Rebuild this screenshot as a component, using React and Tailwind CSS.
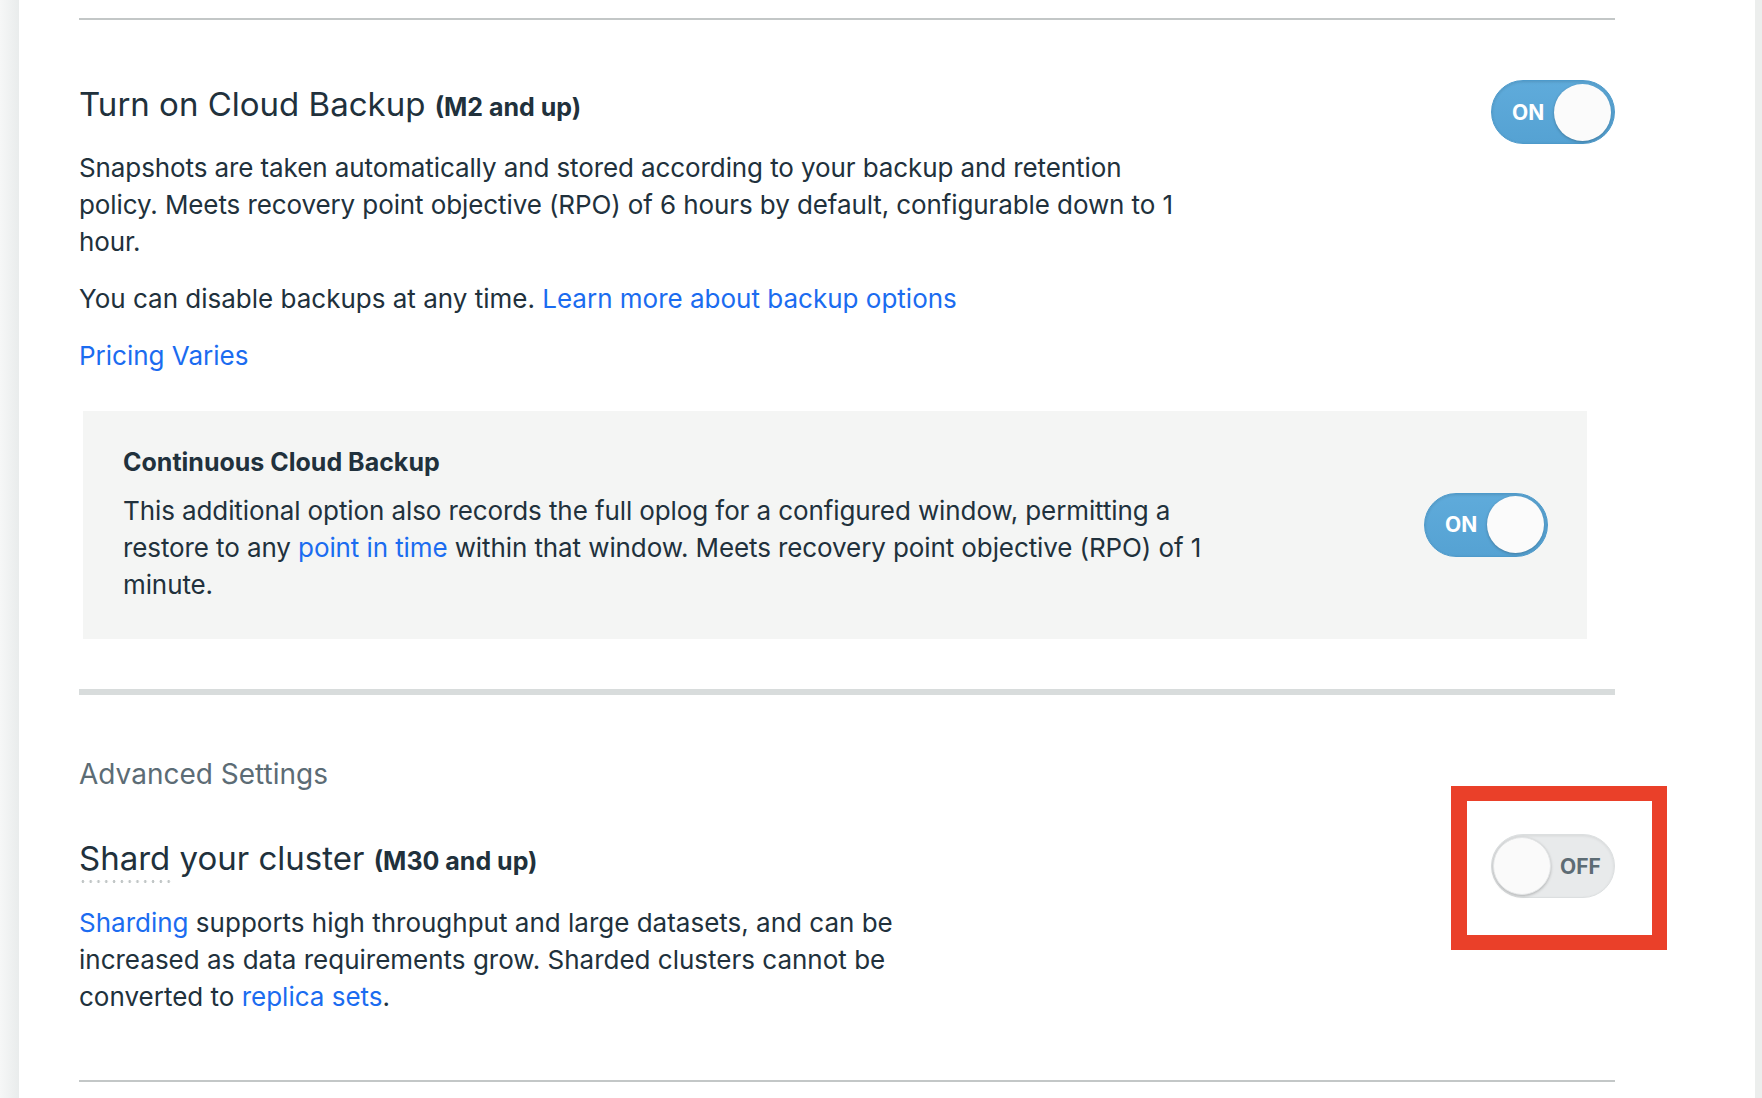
import React from "react";

// Pill switch, ON = blue with knob on the right, OFF = grey with knob on the left
const Toggle = ({ on }) => {
  if (on) {
    return (
      <div className="flex h-[64px] w-[124px] shrink-0 items-center justify-between rounded-full border border-[#4d9acb] bg-linear-to-b from-[#5fabdb] to-[#55a2d3] pl-[20px] pr-[3px] shadow-[inset_0_1px_3px_rgba(0,0,0,0.12)]">
        <span className="text-[21px] font-bold leading-none text-white">ON</span>
        <div className="h-[57px] w-[57px] rounded-full bg-[#fbfbfb] shadow-[0_1px_3px_rgba(0,0,0,0.25)]" />
      </div>
    );
  }
  return (
    <div className="flex h-[64px] w-[124px] shrink-0 items-center gap-[9px] rounded-full border border-[#dcdfe0] bg-[#e8eaeb] pl-[1px] shadow-[inset_0_1px_3px_rgba(0,0,0,0.08)]">
      <div className="h-[58px] w-[58px] rounded-full border border-[#e3e5e6] bg-[#fafafa] shadow-[0_1px_3px_rgba(0,0,0,0.25)]" />
      <span className="text-[21px] font-bold leading-none text-[#5d6c74]">OFF</span>
    </div>
  );
};

const Link = ({ children }) => <a className="text-[#1b6cf0] cursor-pointer">{children}</a>;

export default function App() {
  return (
    <div className="flex min-h-screen bg-white font-['Inter',sans-serif] text-[#21313c]">
      {/* left nav edge */}
      <div className="w-[19px] shrink-0 bg-linear-to-r from-[#f6f7f7] to-[#e9ecec]" />

      <main className="flex-1 pl-[60px] pt-[18px]">
        <div className="w-[1536px]">
          <hr className="h-[2px] border-0 bg-[#c3c7c7]" />

          {/* Cloud Backup */}
          <section className="mt-[60px] flex items-start justify-between">
            <div className="w-[1110px]">
              <h2 className="mt-[4px] text-[33px] leading-[40px]">
                Turn on Cloud Backup <span className="text-[25px] font-bold">(M2 and up)</span>
              </h2>
              <p className="mt-[22px] text-[26px] leading-[37px] tracking-[-0.1px]">
                Snapshots are taken automatically and stored according to your backup and retention policy. Meets
                recovery point objective (RPO) of 6 hours by default, configurable down to 1 hour.
              </p>
              <p className="mt-[20px] text-[26px] leading-[37px]">
                You can disable backups at any time. <Link>Learn more about backup options</Link>
              </p>
              <p className="mt-[20px] text-[26px] leading-[37px]">
                <Link>Pricing Varies</Link>
              </p>
            </div>
            <Toggle on />
          </section>

          <div className="ml-[4px] mt-[37px] flex w-[1504px] items-center justify-between bg-[#f4f5f4] pb-[36px] pl-[40px] pr-[39px] pt-[35px]">
            <div className="w-[1100px]">
              <h3 className="text-[25px] font-bold leading-[32px]">Continuous Cloud Backup</h3>
              <p className="mt-[14px] text-[26px] leading-[37px] tracking-[-0.1px]">
                This additional option also records the full oplog for a configured window, permitting a restore to
                any <Link>point in time</Link> within that window. Meets recovery point objective (RPO) of 1 minute.
              </p>
            </div>
            <Toggle on />
          </div>

          <div className="mt-[50px] h-[6px] bg-[#d8dcdc]" />

          {/* Advanced */}
          <p className="mt-[61px] text-[28px] leading-[37px] text-[#5c6c75]">Advanced Settings</p>

          <section className="mt-[41px] flex items-start justify-between">
            <div className="w-[860px]">
              <h2 className="relative mt-[4px] text-[33px] leading-[40px]">
                Shard your cluster <span className="text-[25px] font-bold">(M30 and up)</span>
                <span className="absolute left-0 top-[42px] h-[3px] w-[93px] bg-[radial-gradient(circle,#c1c6c6_1.2px,transparent_1.6px)] bg-[length:7.8px_3px]" />
              </h2>
              <p className="mt-[23px] text-[26px] leading-[37px]">
                <Link>Sharding</Link> supports high throughput and large datasets, and can be increased as data
                requirements grow. Sharded clusters cannot be converted to <Link>replica sets</Link>.
              </p>
            </div>
            <div className="relative">
              <Toggle on={false} />
              {/* annotation frame */}
              <div className="pointer-events-none absolute left-[-40px] top-[-48px] h-[164px] w-[216px] border-[15px] border-l-[16px] border-[#ea4029]" />
            </div>
          </section>

          <hr className="mt-[65px] h-[2px] border-0 bg-[#c3c7c7]" />
        </div>
      </main>

      {/* right edge */}
      <div className="w-[7px] shrink-0 bg-[#eceeed]" />
    </div>
  );
}
